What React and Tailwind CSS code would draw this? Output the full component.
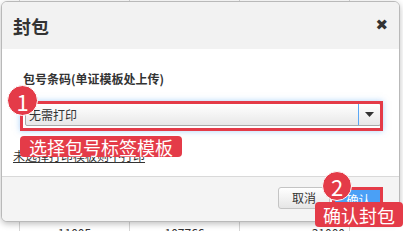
import React from "react";

const font = { fontFamily: '"Noto Sans CJK SC", "Noto Sans", sans-serif' };

export default function App() {
  return (
    <div className="relative w-[403px] h-[231px] overflow-hidden bg-white" style={font}>
      {/* background table */}
      <div className="absolute inset-0 flex">
        <div className="w-[20px] border-r border-[#d6d6d6]" />
        <div className="w-[110px] border-r border-[#d6d6d6] flex items-end justify-center text-[12px] text-[#333] leading-none">
          <span className="translate-y-[8px]">11005</span>
        </div>
        <div className="w-[110px] border-r border-[#d6d6d6] flex items-end justify-center text-[12px] text-[#333] leading-none">
          <span className="translate-y-[8px]">107766</span>
        </div>
        <div className="w-[110px] border-r border-[#d6d6d6] flex items-end justify-end pr-[4px] text-[12px] text-[#333] leading-none">
          <span className="translate-y-[8px]">31000</span>
        </div>
        <div className="flex-1" />
      </div>

      {/* modal */}
      <div className="absolute left-[1px] top-[1px] w-[399px] h-[221px] flex flex-col rounded-[6px] border border-[#b9b9b9] bg-white overflow-hidden shadow-[0_2px_6px_rgba(0,0,0,0.25)]">
        <div className="h-[47px] shrink-0 bg-[#f2f2f2] flex items-center justify-between pl-[11px] pr-[11px]">
          <span className="text-[18px] font-bold text-[#333] leading-none">封包</span>
          <span className="text-[15px] font-bold text-[#333] leading-none" style={{ fontFamily: '"DejaVu Sans", sans-serif' }}>✖</span>
        </div>
        <div className="h-[128px] shrink-0 bg-white border-b border-[#d9d9d9] flex flex-col pt-[23px]">
          <div className="pl-[21px] text-[12px] font-bold text-[#333] leading-[14px]">包号条码(单证模板处上传)</div>
          <div className="ml-[23px] mt-[17px] w-[356px] h-[23px] flex border border-[#aaa] rounded-[2px] bg-gradient-to-b from-white to-[#e8e8e8]">
            <div className="flex-1 flex items-center pl-[3px] text-[12px] text-[#333]">无需打印</div>
            <div className="w-[22px] border-l border-[#5ba7f5] flex items-center justify-center">
              <svg width="9" height="5" viewBox="0 0 9 5"><path d="M0 0H9L4.5 5Z" fill="#333" /></svg>
            </div>
          </div>
          <div className="pl-[11px] mt-[23px] text-[12px] text-[#333] underline leading-[14px]">未选择打印模板则不打印</div>
        </div>
        <div className="flex-1 bg-[#f4f4f4] flex items-start justify-end pt-[10px] pr-[17px] gap-[5px]">
          <div className="w-[52px] h-[22px] rounded-[3px] border border-[#c4c4c4] bg-gradient-to-b from-white to-[#e6e6e6] flex items-center justify-center text-[12px] text-[#333]">取消</div>
          <div className="w-[47px] h-[22px] mt-[2px] rounded-[3px] bg-[#4aa0f6] flex items-center justify-center text-[12px] text-white">确认</div>
        </div>
      </div>

      {/* annotation 1 */}
      <div className="absolute left-[20px] top-[101px] w-[363px] h-[30px] border-[3px] border-[#e43b48] shadow-[0_0_6px_rgba(91,167,245,0.5)]" />
      <div className="absolute left-[7px] top-[85px] w-[31px] h-[31px] rounded-full bg-[#e43b48] border border-white flex items-center justify-center text-white text-[22px] leading-none">1</div>
      <div className="absolute left-[20px] top-[136px] w-[162px] h-[21px] rounded-[4px] bg-[#e43b48] flex items-center justify-center text-white text-[18px] leading-none">选择包号标签模板</div>

      {/* annotation 2 */}
      <div className="absolute left-[332px] top-[187px] w-[51px] h-[26px] border-[3px] border-[#e43b48]" />
      <div className="absolute left-[322px] top-[171px] w-[30px] h-[30px] rounded-full bg-[#e43b48] border border-white flex items-center justify-center text-white text-[22px] leading-none">2</div>
      <div className="absolute left-[315px] top-[202px] w-[88px] h-[25px] rounded-[4px] bg-[#e43b48] flex items-center justify-center text-white text-[18px] leading-none">确认封包</div>
    </div>
  );
}
